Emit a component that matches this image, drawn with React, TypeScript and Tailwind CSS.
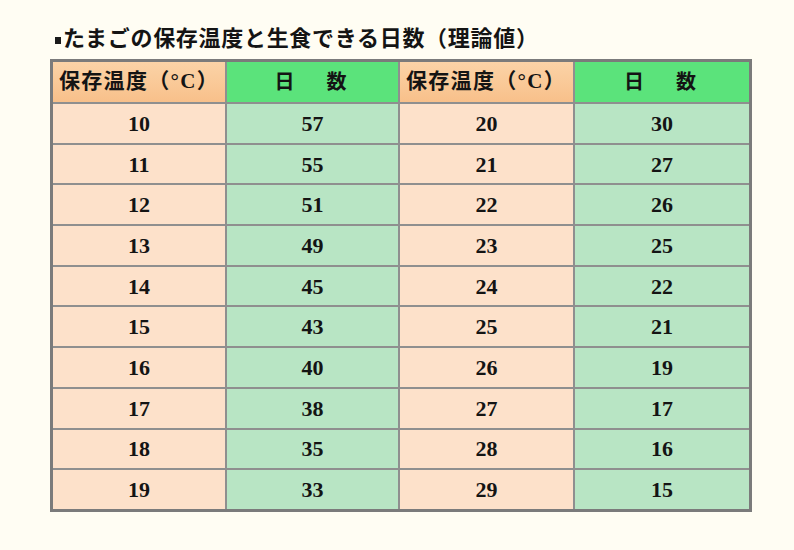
import React from "react";

const rows: [string, string, string, string][] = [
  ["10", "57", "20", "30"],
  ["11", "55", "21", "27"],
  ["12", "51", "22", "26"],
  ["13", "49", "23", "25"],
  ["14", "45", "24", "22"],
  ["15", "43", "25", "21"],
  ["16", "40", "26", "19"],
  ["17", "38", "27", "17"],
  ["18", "35", "28", "16"],
  ["19", "33", "29", "15"],
];

const font = { fontFamily: '"Liberation Serif", "Noto Sans CJK JP", serif' };

export default function App() {
  return (
    <div
      className="w-[794px] h-[550px] bg-[#fffdf3] text-[#141414] overflow-hidden"
      style={font}
    >
      <div className="pt-[24px] pl-[55px] flex items-center h-[59px] pb-[6px] box-border">
        <span className="w-[6px] h-[7px] bg-[#1a1a1a] mr-[2px] mt-[3px]" />
        <span className="text-[22px] leading-none font-bold tracking-[0.7px]">
          たまごの保存温度と生食できる日数（理論値）
        </span>
      </div>
      <div className="ml-[50px] w-[702px] border-[3px] border-[#7b7b7b] bg-[#8f8f8f] flex flex-col gap-[2px]">
        <div className="flex h-[40px] gap-[2px]">
          <div className="w-[172px] bg-gradient-to-b from-[#fbd3a7] to-[#f8c08a] flex items-center pl-[6px] text-[21px] tracking-[1.3px] font-bold whitespace-nowrap">
            保存温度（°C）
          </div>
          <div className="w-[171px] bg-[#5be37b] flex items-center justify-center text-[20px] font-bold tracking-[6px] pl-[2px]">
            日　数
          </div>
          <div className="w-[173px] bg-gradient-to-b from-[#fbd3a7] to-[#f8c08a] flex items-center pl-[6px] text-[21px] tracking-[1.3px] font-bold whitespace-nowrap">
            保存温度（°C）
          </div>
          <div className="flex-1 bg-[#5be37b] flex items-center justify-center text-[20px] font-bold tracking-[6px] pl-[2px]">
            日　数
          </div>
        </div>
        {rows.map((r) => (
          <div key={r[0]} className="flex h-[38.7px] gap-[2px]">
            <div className="w-[172px] bg-[#fde1ca] flex items-center justify-center text-[22px] font-bold">
              {r[0]}
            </div>
            <div className="w-[171px] bg-[#b8e5c4] flex items-center justify-center text-[22px] font-bold">
              {r[1]}
            </div>
            <div className="w-[173px] bg-[#fde1ca] flex items-center justify-center text-[22px] font-bold">
              {r[2]}
            </div>
            <div className="flex-1 bg-[#b8e5c4] flex items-center justify-center text-[22px] font-bold">
              {r[3]}
            </div>
          </div>
        ))}
      </div>
    </div>
  );
}
